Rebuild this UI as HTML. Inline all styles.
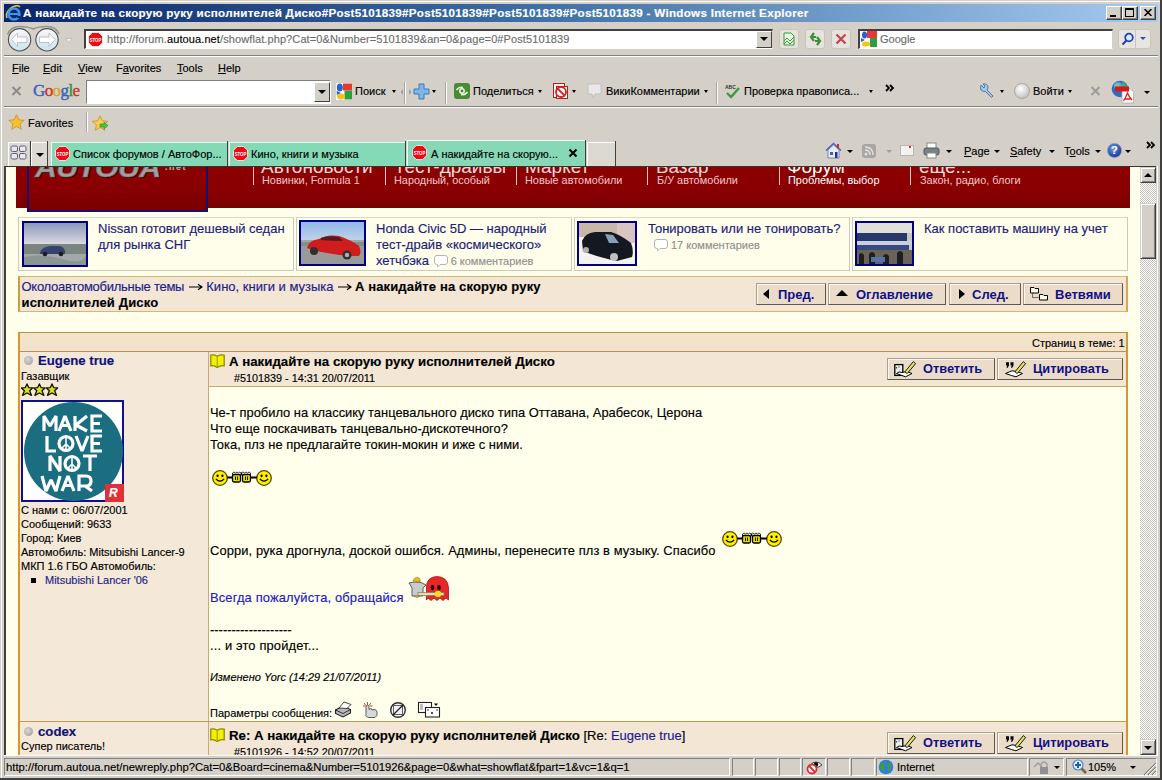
<!DOCTYPE html>
<html><head><meta charset="utf-8">
<style>
*{box-sizing:border-box}
html,body{margin:0;padding:0}
body{width:1162px;height:780px;overflow:hidden;position:relative;background:#D4D0C8;font-family:"Liberation Sans",sans-serif;font-size:11px;color:#000}
.a{position:absolute}
.t{position:absolute;white-space:nowrap;line-height:1;-webkit-text-stroke:0.15px currentColor}
/* chrome */
#title{left:4px;top:4px;width:1154px;height:18px;background:linear-gradient(to right,#0A246A 0%,#3A6EA5 45%,#A6CAF0 100%)}
#title .tt{left:19px;top:3.5px;color:#fff;font-weight:bold;font-size:11.2px;letter-spacing:0.27px;transform:scaleX(1.04);transform-origin:left}
.wbtn{position:absolute;top:6px;width:16px;height:14px;background:#D4D0C8;border:1px solid;border-color:#fff #404040 #404040 #fff;box-shadow:inset -1px -1px #808080}
#content{left:4px;top:166px;width:1152px;height:589px;border-top:1px solid #303830;border-left:2px solid #404040;background:#FFFEEA;overflow:hidden}
#status{left:4px;top:755px;width:1154px;height:23px}

.hb{font-size:19px;color:#F4D8D8;line-height:1;-webkit-text-stroke:0}
.hs{font-size:10.9px;color:#F0C8C8;line-height:1;-webkit-text-stroke:0}
.tz{top:50px;width:276px;height:54px;border:1px solid #CACABE;border-top-color:#D8D8CC}
.th{top:54px;height:46px;border:2px solid #0C0C78}
.tl{font-size:13px;line-height:16px;color:#1C1C7C}
.cm{font-size:11px;color:#909090;position:relative;padding-left:18px}
.ci{position:absolute;left:1px;top:0px;width:14px;height:13px}
.nb{top:116px;height:22px;background:#EADCC8;border:1px solid;border-color:#A8A090 #605848 #605848 #A8A090;box-shadow:inset 1px 1px #FFF8EE}
.nb span,.pb span{position:absolute;top:4px;font-size:13px;font-weight:bold;color:#10108A;white-space:nowrap;line-height:1}
.tri{position:absolute;width:0;height:0}
.pb{height:22px;background:#EADCC8;border:1px solid;border-color:#A8A090 #605848 #605848 #A8A090;box-shadow:inset 1px 1px #FFF8EE}
.pb span{top:4px;font-size:12.8px}
.pt{font-size:12.9px;line-height:16.2px}
.sbb{width:16px;height:16px;background:#D4D0C8;border:1px solid;border-color:#D4D0C8 #404040 #404040 #D4D0C8;box-shadow:inset 1px 1px #fff,inset -1px -1px #808080}
.sbb i{position:absolute;left:3px;width:0;height:0}
.sp{top:758px;height:18px;border:1px solid;border-color:#808080 #fff #fff #808080}
.bc{font-size:13px;line-height:16px}
</style></head><body>
<!-- frame -->
<div class="a" style="left:1px;top:1px;width:1px;height:777px;background:#fff"></div>
<div class="a" style="left:1px;top:1px;width:1159px;height:1px;background:#fff"></div>
<div class="a" style="left:1160px;top:0;width:2px;height:780px;background:#404040"></div>
<div class="a" style="left:0;top:778px;width:1162px;height:2px;background:#404040"></div>
<div class="a" style="left:1157px;top:166px;width:1px;height:589px;background:#fff"></div>

<div id="title" class="a">
  <div class="t tt">А накидайте на скорую руку исполнителей Диско#Post5101839#Post5101839#Post5101839#Post5101839 - Windows Internet Explorer</div>
</div>
<svg class="a" style="left:5px;top:5px" width="17" height="17" viewBox="0 0 17 17"><path d="M2 13 Q0 8 6 3 Q12 -1 15 2" fill="none" stroke="#E8C040" stroke-width="1.6"/><circle cx="9" cy="9" r="5.5" fill="none" stroke="#3A98E8" stroke-width="2.5"/><path d="M4 9 H14" stroke="#3A98E8" stroke-width="2"/><path d="M12 12 L15 12" stroke="#0A246A" stroke-width="2"/></svg>
<div class="wbtn" style="left:1106px"></div>
<div class="wbtn" style="left:1122px"></div>
<div class="wbtn" style="left:1140px"></div>
<div class="a" style="left:1110px;top:15px;width:6px;height:2px;background:#000"></div>
<div class="a" style="left:1125px;top:8px;width:9px;height:9px;border:1px solid #000;border-top-width:2px"></div>
<svg class="a" style="left:1144px;top:9px" width="8" height="7" viewBox="0 0 8 7"><path d="M0.5 0 L7.5 7 M7.5 0 L0.5 7" stroke="#000" stroke-width="1.5"/></svg>

<!-- nav bar -->
<svg class="a" style="left:4px;top:22px" width="70" height="33" viewBox="0 0 70 33">
 <defs><linearGradient id="bg1" x1="0" y1="0" x2="0" y2="1"><stop offset="0" stop-color="#FAFBFD"/><stop offset="0.5" stop-color="#E4E8F0"/><stop offset="1" stop-color="#C8E8F4"/></linearGradient></defs>
 <path d="M3.5 12.5 Q7 4.5 15.6 4.5 Q24 4.5 29.3 7 Q34 4.5 43 4.5 Q52 4.5 55 12" fill="none" stroke="#8E968C" stroke-width="1.5"/>
 <circle cx="15.6" cy="17.8" r="11.2" fill="url(#bg1)" stroke="#4E4E4E" stroke-width="1.1"/>
 <circle cx="43" cy="17.8" r="11.2" fill="url(#bg1)" stroke="#4E4E4E" stroke-width="1.1"/>
 <path d="M7.5 17.5 L13.5 11 L13.5 15 L23 15 L23 20.5 L13.5 20.5 L13.5 24.5 Z" fill="#fff" stroke="#B0BCC8" stroke-width="0.9"/>
 <path d="M51 17.5 L45 11 L45 15 L35.5 15 L35.5 20.5 L45 20.5 L45 24.5 Z" fill="#fff" stroke="#B0BCC8" stroke-width="0.9"/>
 <path d="M61.5 16.5 L68 16.5 L64.75 20.5 Z" fill="#F0EEEA" stroke="#B8B4AC" stroke-width="0.7"/>
</svg>
<div class="a" style="left:84px;top:29px;width:689px;height:20px;background:#fff;border-top:2px solid #404040;border-left:2px solid #404040;border-right:1px solid #D4D0C8;border-bottom:1px solid #fff"></div>
<svg class="a" style="left:88px;top:32px" width="15" height="15" viewBox="0 0 15 15"><path d="M4.3 0.5 H10.7 L14.5 4.3 V10.7 L10.7 14.5 H4.3 L0.5 10.7 V4.3 Z" fill="#EE0A14" stroke="#fff" stroke-width="0.8"/><text x="7.5" y="9.6" font-size="5.6" font-weight="bold" fill="#fff" text-anchor="middle" font-family="Liberation Sans" textLength="11.5" lengthAdjust="spacingAndGlyphs">STOP</text></svg>
<div class="t" style="left:107px;top:34px;font-size:11px;color:#6D6D6D;letter-spacing:0.1px">http://forum.<span style="color:#000">autoua.net</span>/showflat.php?Cat=0&amp;Number=5101839&amp;an=0&amp;page=0#Post5101839</div>
<div class="a" style="left:756px;top:31px;width:16px;height:17px;background:#D4D0C8;border:1px solid;border-color:#fff #404040 #404040 #fff"></div>
<div class="a" style="left:760px;top:37px;width:0;height:0;border-left:4px solid transparent;border-right:4px solid transparent;border-top:4px solid #000"></div>
<div class="a" style="left:779px;top:29px;width:20px;height:20px;border:1px solid #C8C5BE;border-radius:3px;background:#E6E3DD"></div>
<svg class="a" style="left:782px;top:32px" width="14" height="14" viewBox="0 0 14 14"><path d="M2 1 H9 L12 4 V13 H2 Z" fill="#E8F8E8" stroke="#3A9A3A"/><path d="M2 9 L5 6 L8 9 L12 5 M2 12 L5 9 L8 12 L12 8" fill="none" stroke="#3A9A3A"/></svg>
<div class="a" style="left:805px;top:29px;width:20px;height:20px;border:1px solid #C8C5BE;border-radius:3px;background:#E6E3DD"></div>
<svg class="a" style="left:808px;top:32px" width="15" height="14" viewBox="0 0 15 14"><path d="M6 1 L3 5 L6 9 M3 5 H8" fill="none" stroke="#3C8E3C" stroke-width="2.2"/><path d="M9 13 L12 9 L9 5 M12 9 H7" fill="none" stroke="#3C8E3C" stroke-width="2.2"/></svg>
<div class="a" style="left:831px;top:29px;width:20px;height:20px;border:1px solid #C8C5BE;border-radius:3px;background:#E6E3DD"></div>
<svg class="a" style="left:835px;top:33px" width="12" height="12" viewBox="0 0 12 12"><path d="M1.5 1.5 L10.5 10.5 M10.5 1.5 L1.5 10.5" stroke="#C0444C" stroke-width="2.2"/></svg>
<div class="a" style="left:858px;top:29px;width:255px;height:20px;background:#fff;border-top:2px solid #404040;border-left:2px solid #404040;border-right:1px solid #D4D0C8;border-bottom:1px solid #fff"></div>
<svg class="a" style="left:861px;top:31px" width="16" height="16" viewBox="0 0 16 16"><rect x="0" y="0" width="16" height="16" fill="#fff"/><path d="M6 0 H16 V7 H6 Z" fill="#E53935"/><path d="M9 7 H16 V16 H9 Z" fill="#2E9E3E"/><ellipse cx="3.5" cy="4" rx="2.5" ry="3.5" fill="#2A5FD0"/><ellipse cx="5" cy="13" rx="4" ry="2.5" fill="#F6C21A"/><path d="M0 7 L4 9 L0 11Z" fill="#2A5FD0"/></svg>
<div class="t" style="left:880px;top:34px;font-size:11px;color:#6D6D6D">Google</div>
<div class="a" style="left:1118px;top:29px;width:33px;height:20px;border:1px solid #C8C5BE;border-radius:3px;background:#E8E5E0"></div>
<div class="a" style="left:1135px;top:30px;width:1px;height:18px;background:#C8C5BE"></div>
<svg class="a" style="left:1121px;top:32px" width="13" height="14" viewBox="0 0 13 14"><circle cx="8" cy="5.5" r="3.8" fill="#D8F0FF" stroke="#2040C0" stroke-width="1.8"/><path d="M5.5 8.5 L1.5 12.5" stroke="#2040C0" stroke-width="2.2"/></svg>
<div class="a" style="left:1140px;top:37px;width:0;height:0;border-left:3px solid transparent;border-right:3px solid transparent;border-top:3px solid #3050B0"></div>
<div class="a" style="left:4px;top:55px;width:1154px;height:1px;background:#808080"></div>
<div class="a" style="left:4px;top:56px;width:1154px;height:1px;background:#fff"></div>

<!-- menu bar -->
<div class="t" style="left:12px;top:63px"><u>F</u>ile</div>
<div class="t" style="left:43px;top:63px"><u>E</u>dit</div>
<div class="t" style="left:78px;top:63px"><u>V</u>iew</div>
<div class="t" style="left:116px;top:63px">F<u>a</u>vorites</div>
<div class="t" style="left:177px;top:63px"><u>T</u>ools</div>
<div class="t" style="left:218px;top:63px"><u>H</u>elp</div>

<!-- google toolbar -->
<svg class="a" style="left:11px;top:86px" width="11" height="10" viewBox="0 0 11 10"><path d="M1.5 1 L9.5 9 M9.5 1 L1.5 9" stroke="#8C8C8C" stroke-width="2"/></svg>
<div class="t" style="left:33px;top:82px;font-family:'Liberation Serif',serif;font-size:17px;letter-spacing:-0.6px;-webkit-text-stroke:0.4px currentColor"><span style="color:#3462C4">G</span><span style="color:#C8382A">o</span><span style="color:#D8A818">o</span><span style="color:#3462C4">g</span><span style="color:#30963A">l</span><span style="color:#C8382A">e</span></div>
<div class="a" style="left:86px;top:80px;width:245px;height:24px;background:#fff;border:1px solid;border-color:#808080 #fff #fff #808080"></div>
<div class="a" style="left:314px;top:82px;width:16px;height:20px;background:#D4D0C8;border:1px solid;border-color:#fff #404040 #404040 #fff"></div>
<div class="a" style="left:318px;top:90px;width:0;height:0;border-left:4px solid transparent;border-right:4px solid transparent;border-top:4px solid #000"></div>
<svg class="a" style="left:336px;top:83px" width="16" height="17" viewBox="0 0 16 17"><rect x="0" y="0" width="16" height="17" fill="#fff"/><path d="M7 0.5 H16 V7.5 H7 Z" fill="#E53935"/><path d="M8.5 7.5 H16 V16.5 H8.5 Z" fill="#2E9E3E"/><ellipse cx="3.8" cy="4.5" rx="3" ry="4" fill="#2A5FD0"/><path d="M0.5 8 L5 10 L1 12Z" fill="#2A5FD0"/><ellipse cx="5" cy="13.5" rx="4" ry="3" fill="#F6C21A"/></svg>
<div class="t" style="left:355px;top:86px">Поиск</div>
<div class="a" style="left:392px;top:90px;width:0;height:0;border-left:2.5px solid transparent;border-right:2.5px solid transparent;border-top:3px solid #000"></div><svg class="a" style="left:400px;top:88px" width="12" height="8" viewBox="0 0 12 8"><path d="M3 1 L0.5 4 L3 7Z M9 1 L11.5 4 L9 7Z" fill="#A0A0A8"/></svg>
<div class="a" style="left:404px;top:82px;width:1px;height:22px;background:#A8A59E"></div><div class="a" style="left:405px;top:82px;width:1px;height:22px;background:#fff"></div>
<svg class="a" style="left:413px;top:83px" width="17" height="17" viewBox="0 0 17 17"><path d="M6 1 H11 V6 H16 V11 H11 V16 H6 V11 H1 V6 H6 Z" fill="#7FB6E8" stroke="#3A78B8"/></svg>
<div class="a" style="left:432px;top:90px;width:0;height:0;border-left:2.5px solid transparent;border-right:2.5px solid transparent;border-top:3px solid #000"></div>
<div class="a" style="left:445px;top:82px;width:1px;height:22px;background:#A8A59E"></div><div class="a" style="left:446px;top:82px;width:1px;height:22px;background:#fff"></div>
<svg class="a" style="left:454px;top:83px" width="16" height="16" viewBox="0 0 16 16"><rect x="0" y="0" width="16" height="16" rx="3" fill="#4A8A34"/><path d="M2.5 7 Q5 3.5 9 4.5 M13.5 9 Q11 12.5 7 11.5" fill="none" stroke="#E8F8E0" stroke-width="1.6"/><circle cx="8" cy="8" r="2.2" fill="none" stroke="#E8F8E0" stroke-width="1.5"/></svg>
<div class="t" style="left:473px;top:86px">Поделиться</div>
<div class="a" style="left:538px;top:90px;width:0;height:0;border-left:2.5px solid transparent;border-right:2.5px solid transparent;border-top:3px solid #000"></div>
<svg class="a" style="left:552px;top:82px" width="17" height="18" viewBox="0 0 17 18"><rect x="1.5" y="1.5" width="11" height="14" fill="#F4F0F0" stroke="#A02828"/><rect x="4.5" y="4.5" width="11" height="12" fill="#fff" stroke="#A02828"/><circle cx="9" cy="10" r="5" fill="none" stroke="#E02020" stroke-width="1.8"/><path d="M5.5 6.5 L12.5 13.5" stroke="#E02020" stroke-width="1.8"/></svg>
<div class="a" style="left:572px;top:90px;width:0;height:0;border-left:2.5px solid transparent;border-right:2.5px solid transparent;border-top:3px solid #000"></div>
<svg class="a" style="left:587px;top:83px" width="15" height="17" viewBox="0 0 15 17"><path d="M1 1 H14 V11 H8 L6 15 L5 11 H1 Z" fill="#E8E8E8" stroke="#C0C0C0"/></svg>
<div class="t" style="left:606px;top:86px">ВикиКомментарии</div>
<div class="a" style="left:704px;top:90px;width:0;height:0;border-left:2.5px solid transparent;border-right:2.5px solid transparent;border-top:3px solid #000"></div>
<div class="a" style="left:716px;top:82px;width:1px;height:22px;background:#A8A59E"></div><div class="a" style="left:717px;top:82px;width:1px;height:22px;background:#fff"></div>
<svg class="a" style="left:724px;top:83px" width="17" height="17" viewBox="0 0 17 17"><text x="1" y="6" font-size="5" font-weight="bold" font-family="Liberation Sans" fill="#333">ABC</text><path d="M3 10 L7 14 L15 5" fill="none" stroke="#3A9A3A" stroke-width="2.4"/></svg>
<div class="t" style="left:744px;top:86px">Проверка правописа...</div>
<div class="a" style="left:869px;top:90px;width:0;height:0;border-left:2.5px solid transparent;border-right:2.5px solid transparent;border-top:3px solid #000"></div>
<svg class="a" style="left:885px;top:84px" width="10" height="8" viewBox="0 0 10 8"><path d="M1 1 L4 4 L1 7 M5 1 L8 4 L5 7" fill="none" stroke="#000" stroke-width="1.8"/></svg>
<svg class="a" style="left:978px;top:82px" width="17" height="17" viewBox="0 0 17 17"><path d="M3 3 L6 6 L7 4 L5 2 Q9 1 10 5 Q10 7 9 8 L15 14 L13.5 15.5 L7.5 9.5 Q5 10 3 8 Q2 6 3 3Z" fill="#A8C8E8" stroke="#4A78A8"/></svg>
<div class="a" style="left:1000px;top:90px;width:0;height:0;border-left:2.5px solid transparent;border-right:2.5px solid transparent;border-top:3px solid #000"></div>
<div class="a" style="left:1014px;top:83px;width:16px;height:16px;border-radius:50%;background:radial-gradient(circle at 40% 35%,#fff,#C8C8C8 70%,#A0A0A0);border:1px solid #A8A8A8"></div>
<div class="t" style="left:1033px;top:86px">Войти</div>
<div class="a" style="left:1068px;top:90px;width:0;height:0;border-left:2.5px solid transparent;border-right:2.5px solid transparent;border-top:3px solid #000"></div>
<svg class="a" style="left:1090px;top:86px" width="11" height="10" viewBox="0 0 11 10"><path d="M1.5 1 L9.5 9 M9.5 1 L1.5 9" stroke="#9C9C9C" stroke-width="2"/></svg>
<svg class="a" style="left:1111px;top:80px" width="24" height="24" viewBox="0 0 24 24"><circle cx="9" cy="9" r="8.3" fill="#2E6EC0"/><path d="M3 5 Q6 2 9 4 Q8 8 5 9Z M11 2 Q15 3 16 7 Q13 8 11 6Z" fill="#4CB050"/><circle cx="7" cy="6" r="4" fill="#9AD0F8" opacity="0.5"/><path d="M11 8.5 H19 L22.5 12 V23 H11Z" fill="#fff" stroke="#A8A8A8" stroke-width="0.8"/><rect x="4" y="6.5" width="14" height="5" fill="#D81818"/><path d="M12.5 21 Q15 17 16.5 13 Q18 17 21 20 M13.5 19 H20" fill="none" stroke="#E02020" stroke-width="1.3"/></svg>
<div class="a" style="left:1144px;top:91px;width:0;height:0;border-left:3px solid transparent;border-right:3px solid transparent;border-top:3px solid #000"></div>
<div class="a" style="left:4px;top:106px;width:1154px;height:1px;background:#808080"></div>
<div class="a" style="left:4px;top:107px;width:1154px;height:1px;background:#fff"></div>

<!-- favorites bar -->
<svg class="a" style="left:8px;top:114px" width="17" height="17" viewBox="0 0 17 17"><path d="M8.5 0.8 L10.8 5.8 L16.2 6.3 L12 9.9 L13.3 15.3 L8.5 12.4 L3.7 15.3 L5 9.9 L0.8 6.3 L6.2 5.8 Z" fill="#F6C130" stroke="#C89020" stroke-width="0.8"/></svg>
<div class="t" style="left:28px;top:118px">Favorites</div>
<div class="a" style="left:86px;top:112px;width:1px;height:20px;background:#A8A59E"></div><div class="a" style="left:87px;top:112px;width:1px;height:20px;background:#fff"></div>
<svg class="a" style="left:92px;top:115px" width="17" height="17" viewBox="0 0 17 17"><path d="M8 0.8 L10.3 5.8 L15.7 6.3 L11.5 9.9 L12.8 15.3 L8 12.4 L3.2 15.3 L4.5 9.9 L0.3 6.3 L5.7 5.8 Z" fill="#F6D050" stroke="#C89020" stroke-width="0.8"/><path d="M8 9 H12 V7 L16 10.5 L12 14 V12 H8Z" fill="#50C040" stroke="#2A8A2A" stroke-width="0.6"/></svg>

<!-- tab row -->
<div class="a" style="left:8px;top:142px;width:21px;height:24px;background:#DCD9D2;border-left:1px solid #fff;border-top:1px solid #fff"></div>
<svg class="a" style="left:10px;top:145px" width="17" height="16" viewBox="0 0 17 16"><rect x="1" y="1" width="6.5" height="5.5" rx="1.5" fill="#E8E8F4" stroke="#606070"/><rect x="9.5" y="1" width="6.5" height="5.5" rx="1.5" fill="#E8E8F4" stroke="#606070"/><rect x="1" y="8.5" width="6.5" height="5.5" rx="1.5" fill="#E8E8F4" stroke="#606070"/><rect x="9.5" y="8.5" width="6.5" height="5.5" rx="1.5" fill="#E8E8F4" stroke="#606070"/></svg>
<div class="a" style="left:30px;top:141px;width:1px;height:25px;background:#404040"></div>
<div class="a" style="left:31px;top:142px;width:16px;height:24px;background:#DCD9D2;border-left:1px solid #fff;border-top:1px solid #fff"></div>
<div class="a" style="left:36px;top:153px;width:0;height:0;border-left:4px solid transparent;border-right:4px solid transparent;border-top:4px solid #000"></div>
<div class="a" style="left:47px;top:141px;width:1px;height:25px;background:#404040"></div>
<div class="a" style="left:51px;top:142px;width:177px;height:25px;background:#84D9B6;border-top:1px solid #E8F8F0;border-left:1px solid #E8F8F0"></div>
<div class="a" style="left:227px;top:141px;width:1px;height:25px;background:#404040"></div>
<svg class="a" style="left:55px;top:146px" width="15" height="15" viewBox="0 0 15 15"><path d="M4.3 0.5 H10.7 L14.5 4.3 V10.7 L10.7 14.5 H4.3 L0.5 10.7 V4.3 Z" fill="#EE0A14" stroke="#fff" stroke-width="0.8"/><text x="7.5" y="9.6" font-size="5.6" font-weight="bold" fill="#fff" text-anchor="middle" font-family="Liberation Sans" textLength="11.5" lengthAdjust="spacingAndGlyphs">STOP</text></svg>
<div class="t" style="left:73px;top:149px">Список форумов / АвтоФор...</div>
<div class="a" style="left:229px;top:142px;width:177px;height:25px;background:#84D9B6;border-top:1px solid #E8F8F0;border-left:1px solid #E8F8F0"></div>
<div class="a" style="left:405px;top:141px;width:1px;height:25px;background:#404040"></div>
<svg class="a" style="left:233px;top:146px" width="15" height="15" viewBox="0 0 15 15"><path d="M4.3 0.5 H10.7 L14.5 4.3 V10.7 L10.7 14.5 H4.3 L0.5 10.7 V4.3 Z" fill="#EE0A14" stroke="#fff" stroke-width="0.8"/><text x="7.5" y="9.6" font-size="5.6" font-weight="bold" fill="#fff" text-anchor="middle" font-family="Liberation Sans" textLength="11.5" lengthAdjust="spacingAndGlyphs">STOP</text></svg>
<div class="t" style="left:251px;top:149px">Кино, книги и музыка</div>
<div class="a" style="left:407px;top:140px;width:179px;height:27px;background:#86D8B6;border-top:1px solid #F0FFF8;border-left:1px solid #F0FFF8"></div>
<div class="a" style="left:585px;top:140px;width:1px;height:26px;background:#404040"></div>
<svg class="a" style="left:412px;top:145px" width="15" height="15" viewBox="0 0 15 15"><path d="M4.3 0.5 H10.7 L14.5 4.3 V10.7 L10.7 14.5 H4.3 L0.5 10.7 V4.3 Z" fill="#EE0A14" stroke="#fff" stroke-width="0.8"/><text x="7.5" y="9.6" font-size="5.6" font-weight="bold" fill="#fff" text-anchor="middle" font-family="Liberation Sans" textLength="11.5" lengthAdjust="spacingAndGlyphs">STOP</text></svg>
<div class="t" style="left:431px;top:149px">А накидайте на скорую...</div>
<svg class="a" style="left:568px;top:148px" width="10" height="10" viewBox="0 0 10 10"><path d="M1.5 1.5 L8.5 8.5 M8.5 1.5 L1.5 8.5" stroke="#000" stroke-width="2"/></svg>
<div class="a" style="left:587px;top:142px;width:29px;height:24px;background:#DCD9D2;border-top:1px solid #fff;border-left:1px solid #fff"></div>
<div class="a" style="left:615px;top:141px;width:1px;height:25px;background:#404040"></div>

<svg class="a" style="left:825px;top:142px" width="17" height="17" viewBox="0 0 17 17"><path d="M1 8.5 L8.5 1.5 L16 8.5" fill="none" stroke="#5060C0" stroke-width="1.5"/><path d="M3 8 V16 H14 V8 L8.5 3 Z" fill="#E8ECF8" stroke="#6070A0" stroke-width="0.8"/><rect x="5" y="10" width="3" height="3" fill="#4060B0"/><rect x="10" y="10" width="2.5" height="6" fill="#203880"/><rect x="12" y="2" width="2" height="4" fill="#C03030"/></svg>
<div class="a" style="left:847px;top:150px;width:0;height:0;border-left:3px solid transparent;border-right:3px solid transparent;border-top:3px solid #000"></div>
<div class="a" style="left:862px;top:144px;width:14px;height:14px;border-radius:3px;background:#A8A6A0"></div>
<svg class="a" style="left:862px;top:144px" width="14" height="14" viewBox="0 0 14 14"><circle cx="4" cy="10" r="1.5" fill="#E0E0E0"/><path d="M3 6 Q8 6 8 11 M3 3 Q11 3 11 11" fill="none" stroke="#E0E0E0" stroke-width="1.5"/></svg>
<div class="a" style="left:886px;top:150px;width:0;height:0;border-left:3px solid transparent;border-right:3px solid transparent;border-top:3px solid #A0A0A0"></div>
<div class="a" style="left:900px;top:145px;width:14px;height:11px;background:#F4F2EE;border:1px solid #B8B6B0"></div>
<div class="a" style="left:909px;top:146px;width:2px;height:2px;background:#D03030"></div>
<svg class="a" style="left:923px;top:142px" width="17" height="17" viewBox="0 0 17 17"><rect x="4" y="1" width="9" height="6" fill="#fff" stroke="#888"/><rect x="1" y="6" width="15" height="7" rx="2" fill="#7A8088" stroke="#505860"/><rect x="4" y="11" width="9" height="5" fill="#fff" stroke="#888"/></svg>
<div class="a" style="left:946px;top:150px;width:0;height:0;border-left:3px solid transparent;border-right:3px solid transparent;border-top:3px solid #000"></div>
<div class="t" style="left:964px;top:146px"><u>P</u>age</div>
<div class="a" style="left:994px;top:150px;width:0;height:0;border-left:3px solid transparent;border-right:3px solid transparent;border-top:3px solid #000"></div>
<div class="t" style="left:1010px;top:146px"><u>S</u>afety</div>
<div class="a" style="left:1049px;top:150px;width:0;height:0;border-left:3px solid transparent;border-right:3px solid transparent;border-top:3px solid #000"></div>
<div class="t" style="left:1064px;top:146px">T<u>o</u>ols</div>
<div class="a" style="left:1095px;top:150px;width:0;height:0;border-left:3px solid transparent;border-right:3px solid transparent;border-top:3px solid #000"></div>
<div class="a" style="left:1107px;top:143px;width:15px;height:15px;border-radius:50%;background:radial-gradient(circle at 40% 35%,#6A9AE8,#1A3A9A 75%);border:1px solid #8090B0"></div>
<div class="t" style="left:1111px;top:145px;color:#fff;font-weight:bold;font-size:11px">?</div>
<div class="a" style="left:1125px;top:150px;width:0;height:0;border-left:3px solid transparent;border-right:3px solid transparent;border-top:3px solid #000"></div>
<svg class="a" style="left:1146px;top:141px" width="10" height="8" viewBox="0 0 10 8"><path d="M1 1 L4 4 L1 7 M5 1 L8 4 L5 7" fill="none" stroke="#000" stroke-width="1.8"/></svg>

<!-- content -->
<div id="content" class="a">
  <!-- header -->
  <div class="a" style="left:10px;top:0;width:1114px;height:41px;background:linear-gradient(#8C0000,#8A0002 50%,#7C0000)"></div>
  <div class="a" style="left:21px;top:-2px;width:181px;height:47px;border:2px solid #18106A;border-top:0;background:linear-gradient(#8C0000,#8A0002 45%,#7C0000 88%,#7C0000)"></div>
  <div class="t" style="left:29px;top:-12px;font-size:27px;font-weight:bold;font-style:italic;color:#A0A0A0;letter-spacing:-0.5px;transform:scaleX(1.12);transform-origin:left;text-shadow:1px 1px 0 #300000,0 0 0 #000;-webkit-text-stroke:0.6px #707070">AUTOUA</div>
  <div class="t" style="left:159px;top:-4px;font-size:9px;font-weight:bold;color:#B0B0B0;letter-spacing:1.5px">.net</div>
  <div class="a" style="left:247px;top:0;width:1px;height:18px;background:#E8C8C8"></div>
  <div class="a" style="left:379px;top:0;width:1px;height:18px;background:#E8C8C8"></div>
  <div class="a" style="left:510px;top:0;width:1px;height:18px;background:#E8C8C8"></div>
  <div class="a" style="left:641px;top:0;width:1px;height:18px;background:#E8C8C8"></div>
  <div class="a" style="left:773px;top:0;width:1px;height:18px;background:#E8C8C8"></div>
  <div class="a" style="left:904px;top:0;width:1px;height:18px;background:#E8C8C8"></div>
  <div class="t hb" style="left:255px;top:-10px">Автоновости</div>
  <div class="t hb" style="left:388px;top:-10px">Тест-драйвы</div>
  <div class="t hb" style="left:519px;top:-10px">Маркет</div>
  <div class="t hb" style="left:650px;top:-10px">Базар</div>
  <div class="t hb" style="left:781px;top:-10px;color:#fff">Форум</div>
  <div class="t hb" style="left:913px;top:-10px">еще...</div>
  <div class="t hs" style="left:256px;top:8px">Новинки, Formula 1</div>
  <div class="t hs" style="left:388px;top:8px">Народный, особый</div>
  <div class="t hs" style="left:519px;top:8px">Новые автомобили</div>
  <div class="t hs" style="left:651px;top:8px">Б/У автомобили</div>
  <div class="t hs" style="left:782px;top:8px;color:#fff">Проблемы, выбор</div>
  <div class="t hs" style="left:914px;top:8px">Закон, радио, блоги</div>

  <!-- teasers -->
  <div class="a tz" style="left:12px"></div>
  <div class="a tz" style="left:290px"></div>
  <div class="a tz" style="left:568px"></div>
  <div class="a tz" style="left:846px"></div>
  <svg class="a" style="left:16px;top:54px" width="66" height="46" viewBox="0 0 66 46"><defs><linearGradient id="sk1" x1="0" y1="0" x2="0" y2="1"><stop offset="0" stop-color="#8C98B8"/><stop offset="0.7" stop-color="#C4C8D8"/><stop offset="1" stop-color="#E0DCE4"/></linearGradient></defs><rect width="66" height="46" fill="#000080"/><rect x="2" y="2" width="62" height="22" fill="url(#sk1)"/><rect x="2" y="23" width="62" height="21" fill="#7A8480"/><rect x="2" y="33" width="62" height="11" fill="#A0A8A8"/><path d="M2 36 Q20 32 40 38 T64 35 V44 H2Z" fill="#8A9690"/><path d="M18 31 Q20 26 28 25 H38 Q42 26 43 30 V33 H18Z" fill="#34446E"/><circle cx="23" cy="33" r="2.3" fill="#1A1A20"/><circle cx="39" cy="33" r="2.3" fill="#1A1A20"/></svg>
  <svg class="a" style="left:293px;top:53px" width="67" height="46" viewBox="0 0 67 46"><defs><linearGradient id="sk2" x1="0" y1="0" x2="0" y2="1"><stop offset="0" stop-color="#90B8E8"/><stop offset="1" stop-color="#C8D8E8"/></linearGradient></defs><rect width="67" height="46" fill="#000080"/><rect x="2" y="2" width="63" height="22" fill="url(#sk2)"/><rect x="2" y="22" width="63" height="22" fill="#9A9A98"/><rect x="2" y="20" width="63" height="6" fill="#708070" opacity="0.5"/><path d="M8 28 Q10 20 20 19 Q28 14 40 16 Q52 20 60 26 Q63 32 60 36 L50 36 Q30 34 14 30Z" fill="#D01C1C"/><path d="M22 18 Q30 15 40 17 L44 21 Q32 21 22 20Z" fill="#502020"/><circle cx="15" cy="31" r="4" fill="#303030"/><circle cx="48" cy="35" r="4.5" fill="#303030"/><circle cx="48" cy="35" r="2.2" fill="#B0B0B0"/></svg>
  <svg class="a" style="left:571px;top:54px" width="60" height="45" viewBox="0 0 60 45"><rect width="60" height="45" fill="#000080"/><rect x="2" y="2" width="56" height="41" fill="#F4F2F2"/><rect x="2" y="2" width="56" height="14" fill="#C8B8A8"/><rect x="40" y="2" width="18" height="20" fill="#D8C4C0"/><path d="M5 20 Q8 12 18 11 H34 Q44 14 54 22 Q57 30 55 36 L40 40 Q20 36 6 30Z" fill="#141820"/><path d="M28 13 L36 14 L42 22 L32 22Z" fill="#8AA0B8"/><circle cx="37" cy="36" r="4" fill="#C0C0C0"/><circle cx="9" cy="29" r="3" fill="#B0B0B0"/></svg>
  <svg class="a" style="left:849px;top:54px" width="59" height="45" viewBox="0 0 59 45"><rect width="59" height="45" fill="#000080"/><rect x="2" y="2" width="55" height="41" fill="#C8C8BC"/><rect x="2" y="2" width="55" height="10" fill="#E0E0D8"/><rect x="2" y="12" width="50" height="8" fill="#28386A"/><rect x="2" y="20" width="55" height="4" fill="#C8D0E0"/><rect x="2" y="24" width="52" height="5" fill="#3A4A80"/><rect x="2" y="29" width="55" height="14" fill="#6A6458"/><path d="M4 43 V34 Q6 30 9 34 V43 M14 43 V33 Q17 29 20 33 V43 M28 43 V35 Q31 31 34 35 V43 M42 43 V32 Q45 28 48 32 V43" fill="#1E1E20"/><rect x="16" y="36" width="14" height="5" fill="#5A70A8"/></svg>
  <div class="t tl" style="left:92px;top:54px">Nissan готовит дешевый седан<br>для рынка СНГ</div>
  <div class="t tl" style="left:370px;top:54px">Honda Civic 5D — народный<br>тест-драйв «космического»<br>хетчбэка <span class="cm"><svg class="ci" width="14" height="13" viewBox="0 0 14 13"><path d="M3 0.5 H11 Q13.5 0.5 13.5 3 V7 Q13.5 9.5 11 9.5 H6 L3.5 12 V9.5 H3 Q0.5 9.5 0.5 7 V3 Q0.5 0.5 3 0.5Z" fill="#fff" stroke="#B4B4B4"/></svg>6 комментариев</span></div>
  <div class="t tl" style="left:642px;top:54px">Тонировать или не тонировать?<br><span class="cm" style="margin-left:5px"><svg class="ci" width="14" height="13" viewBox="0 0 14 13"><path d="M3 0.5 H11 Q13.5 0.5 13.5 3 V7 Q13.5 9.5 11 9.5 H6 L3.5 12 V9.5 H3 Q0.5 9.5 0.5 7 V3 Q0.5 0.5 3 0.5Z" fill="#fff" stroke="#B4B4B4"/></svg>17 комментариев</span></div>
  <div class="t tl" style="left:918px;top:54px">Как поставить машину на учет</div>

  <!-- breadcrumb -->
  <div class="a" style="left:12px;top:109px;width:1110px;height:36px;background:#F3E6D4;border:1px solid #D2B870;border-left:2px solid #C8A040;border-right:2px solid #D8A850"></div>
  <div class="t bc" style="left:15.5px;top:112px;letter-spacing:-0.26px;color:#1C1C8C">Околоавтомобильные темы</div>
  <svg class="a" style="left:183px;top:116px" width="14" height="8" viewBox="0 0 14 8"><path d="M0 4 H12.5 M9 1.2 L13 4 L9 6.8" fill="none" stroke="#000" stroke-width="1.2"/></svg>
  <div class="t bc" style="left:200.3px;top:112px;color:#1C1C8C">Кино, книги и музыка</div>
  <svg class="a" style="left:332px;top:116px" width="14" height="8" viewBox="0 0 14 8"><path d="M0 4 H12.5 M9 1.2 L13 4 L9 6.8" fill="none" stroke="#000" stroke-width="1.2"/></svg>
  <div class="t bc" style="left:348.9px;top:112px;font-weight:bold;letter-spacing:0.15px">А накидайте на скорую руку</div>
  <div class="t bc" style="left:15.5px;top:128px;font-weight:bold;letter-spacing:0.15px">исполнителей Диско</div>
  <div class="a nb" style="left:750px;width:70px"><i class="tri" style="border-right:6px solid #000;border-top:5px solid transparent;border-bottom:5px solid transparent;left:6px;top:5px"></i><span style="left:21px">Пред.</span></div>
  <div class="a nb" style="left:822px;width:118px"><i class="tri" style="border-bottom:6px solid #000;border-left:6px solid transparent;border-right:6px solid transparent;left:7px;top:6px"></i><span style="left:27px">Оглавление</span></div>
  <div class="a nb" style="left:943px;width:72px"><i class="tri" style="border-left:6px solid #000;border-top:5px solid transparent;border-bottom:5px solid transparent;left:9px;top:5px"></i><span style="left:22px">След.</span></div>
  <div class="a nb" style="left:1017px;width:100px"><svg class="a" style="left:6px;top:3px" width="18" height="14" viewBox="0 0 18 14"><path d="M0.5 0.5 H4 L5 1.5 H8.5 V6 H0.5Z" fill="#FFFCE8" stroke="#000" stroke-width="1"/><path d="M9.5 7.5 H13 L14 8.5 H17.5 V13 H9.5Z" fill="#FFFCE8" stroke="#000" stroke-width="1"/><path d="M2.5 6.5 V10.5 H9" fill="none" stroke="#000" stroke-width="1" stroke-dasharray="1 1"/></svg><span style="left:31px">Ветвями</span></div>

  <!-- post table -->
  <div class="a" style="left:12px;top:165px;width:1110px;height:430px;border-top:1px solid #A89848;border-left:2px solid #D8962E;border-right:2px solid #D8962E;background:#FFFFEC"></div>
  <div class="a" style="left:14px;top:166px;width:1106px;height:18px;background:linear-gradient(#F5E3C8,#F0E2CC)"></div>
  <div class="t" style="left:1026px;top:171px;font-size:11px">Страниц в теме: 1</div>
  <div class="a" style="left:14px;top:184px;width:1106px;height:1px;background:#B89050"></div>
  <!-- post 1 -->
  <div class="a" style="left:14px;top:185px;width:188px;height:369px;background:#F4E8D8"></div>
  <div class="a" style="left:202px;top:185px;width:1px;height:369px;background:#C8A878"></div>
  <div class="a" style="left:203px;top:185px;width:917px;height:34px;background:#F3E6D4"></div>
  <div class="a" style="left:203px;top:219px;width:917px;height:1px;background:#C8A870"></div>
  <div class="a" style="left:18px;top:189px;width:9px;height:9px;border-radius:50%;background:radial-gradient(circle at 40% 40%,#D8D8D8,#9A9A9A)"></div>
  <div class="t" style="left:32px;top:187px;font-size:13.2px;font-weight:bold;color:#10107A">Eugene true</div>
  <div class="t" style="left:15px;top:204px;font-size:11px">Газавщик</div>
  <svg class="a" style="left:15px;top:216px" width="38" height="14" viewBox="0 0 38 14"><g fill="#D8E020" stroke="#141400" stroke-width="1.3" stroke-linejoin="round"><path id="st" d="M6 0.9 L7.7 4.6 L11.6 4.9 L8.6 7.7 L10.5 12.3 L6 10 L1.5 12.3 L3.4 7.7 L0.4 4.9 L4.3 4.6Z"/><use href="#st" x="12.4"/><use href="#st" x="25"/></g></svg>
  <div class="a" style="left:15px;top:233px;width:103px;height:102px;border:2px solid #10108A;background:#fff"></div>
  <div class="a" style="left:18px;top:235px;width:99px;height:99px;border-radius:50%;background:#1A6E80"></div>
  <svg class="a" style="left:18px;top:235px" width="99" height="99" viewBox="0 0 99 99"><g fill="none" stroke="#fff" stroke-width="3.2" stroke-linejoin="miter" stroke-miterlimit="1.5">
<path d="M20 29 V14 L26 24 L32 14 V29"/><path d="M35 29 L41 14 L47 29 M37.5 23.5 H44.5"/><path d="M51 14 V29 M63 14 L52 23 L63 29"/><path d="M78 14 H68 V29 H78 M68 21.5 H76"/>
<path d="M23 34 V49 H32"/><circle cx="42" cy="41.5" r="7"/><path d="M42 34.5 V48.5 M42 42 L37 47 M42 42 L47 47" stroke-width="1.6"/><path d="M52 34 L58 49 L64 34"/><path d="M78 34 H68 V49 H78 M68 41.5 H76"/>
<path d="M26 69 V54 L36 69 V54"/><circle cx="48" cy="61.5" r="7"/><path d="M48 54.5 V68.5 M48 62 L43 67 M48 62 L53 67" stroke-width="1.6"/><path d="M59 54 H73 M66 54 V69"/>
<path d="M18 74 L22 89 L27 78 L32 89 L36 74"/><path d="M38 89 L44 74 L50 89 M40.5 83.5 H47.5"/><path d="M55 89 V74 H62 Q67 74 67 79 Q67 84 62 84 H55 M61 84 L68 89"/>
</g></svg>
  <div class="a" style="left:99px;top:317px;width:19px;height:18px;background:#E0303A"></div>
  <div class="t" style="left:103px;top:320px;color:#fff;font-weight:bold;font-style:italic;font-size:12px">R</div>
  <div class="t" style="left:15px;top:336px;font-size:11px;line-height:14px">С нами с: 06/07/2001<br>Сообщений: 9633<br>Город: Киев<br>Автомобиль: Mitsubishi Lancer-9<br>МКП 1.6 ГБО Автомобиль:</div>
  <div class="a" style="left:25px;top:411px;width:5px;height:5px;background:#000"></div>
  <div class="t" style="left:39px;top:408px;font-size:11px;color:#1C1C8C">Mitsubishi Lancer '06</div>

  <svg class="a" style="left:204px;top:187px" width="16" height="14" viewBox="0 0 16 14"><path d="M0.8 1.2 Q4 0.3 7.2 2.2 Q10.5 0.3 14.2 1.2 V11.8 Q10.5 11 7.2 13.5 Q4 11 0.8 11.8Z" fill="#F2F200" stroke="#8C8C00" stroke-width="1.3"/><path d="M7.2 3 V12.5" stroke="#8C8C00" stroke-width="0.9"/></svg>
  <div class="t" style="left:223px;top:188px;font-size:13.25px;font-weight:bold">А накидайте на скорую руку исполнителей Диско</div>
  <div class="t" style="left:228px;top:206px;font-size:10.8px">#5101839 - 14:31 20/07/2011</div>
  <div class="a pb" style="left:881px;top:191px;width:108px"><svg class="a" style="left:5px;top:2px" width="26" height="17" viewBox="0 0 26 17"><rect x="1.8" y="3.6" width="8" height="10.8" fill="#EEEEEE" stroke="#000" stroke-width="1.3"/><path d="M3.5 6 v1.5 M6 5.5 v1" stroke="#404040" stroke-width="1.2"/><path d="M3.5 12.5 Q6 10 9 11.5 L14 10.5 L19 12.5 L12.5 15.8 L9 14.5 Z" fill="#fff" stroke="#000" stroke-width="1"/><path d="M20.3 0.6 L22.6 2.6 L14.2 12.6 L12 10.8Z" fill="#E4E060" stroke="#1A1A00" stroke-width="1"/></svg><span style="left:35px">Ответить</span></div>
  <div class="a pb" style="left:991px;top:191px;width:126px"><svg class="a" style="left:5px;top:2px" width="26" height="17" viewBox="0 0 26 17"><path d="M3 1.2 H6 V4.5 L4.5 7 L3.5 6.5 L4.2 4.5 H3Z M7.5 1.2 H10.5 V4.5 L9 7 L8 6.5 L8.7 4.5 H7.5Z" fill="#000"/><path d="M2.5 12.5 L9 9.8 L14 10.5 L19.5 12.5 L13 15.8 L8.5 14.5 Z" fill="#fff" stroke="#000" stroke-width="1"/><path d="M20.3 0.6 L22.6 2.6 L14.2 12.6 L12 10.8Z" fill="#E4E060" stroke="#1A1A00" stroke-width="1"/></svg><span style="left:35px">Цитировать</span></div>

  <div class="t pt" style="left:204px;top:238px">Че-т пробило на классику танцевального диско типа Оттавана, Арабесок, Церона<br>Что еще поскачивать танцевально-дискотечного?<br>Тока, плз не предлагайте токин-мокин и иже с ними.</div>
  <svg class="a" style="left:206px;top:302px" width="60" height="17" viewBox="0 0 60 17"><g id="sm206"><circle cx="8" cy="9" r="7.3" fill="#FFF000" stroke="#5A4A00" stroke-width="1.3"/><ellipse cx="5.6" cy="6.8" rx="1.1" ry="1.4" fill="#000"/><ellipse cx="10.4" cy="6.8" rx="1.1" ry="1.4" fill="#000"/><path d="M3.8 9.8 Q8 14.5 12.2 9.8" fill="none" stroke="#000" stroke-width="1.2"/></g><use href="#sm206" x="44"/><path d="M15 8.5 H20 M39 8.5 H45" stroke="#000" stroke-width="1.8"/><path d="M20.5 4 Q22 2 23.5 4 Q25 2 26.5 4 Q28 2 29 4 Q31 2 32.5 4 Q34 2 35.5 4 Q37 2 38.5 4 V6 H20.5Z" fill="#fff" stroke="#000" stroke-width="0.8"/><rect x="20.5" y="5.5" width="8" height="7.5" rx="1.5" fill="#E8D800" stroke="#000" stroke-width="1.3"/><rect x="30.5" y="5.5" width="8" height="7.5" rx="1.5" fill="#E8D800" stroke="#000" stroke-width="1.3"/><path d="M23.5 7.5 V11 M25.5 7.5 V11 M33.5 7.5 V11 M35.5 7.5 V11" stroke="#000" stroke-width="0.9"/><circle cx="29.5" cy="5" r="1" fill="#000"/></svg>
  <div class="t pt" style="left:204px;top:376px;letter-spacing:0.1px">Сорри, рука дрогнула, доской ошибся. Админы, перенесите плз в музыку. Спасибо</div>
  <svg class="a" style="left:716px;top:363px" width="60" height="17" viewBox="0 0 60 17"><g id="sm716"><circle cx="8" cy="9" r="7.3" fill="#FFF000" stroke="#5A4A00" stroke-width="1.3"/><ellipse cx="5.6" cy="6.8" rx="1.1" ry="1.4" fill="#000"/><ellipse cx="10.4" cy="6.8" rx="1.1" ry="1.4" fill="#000"/><path d="M3.8 9.8 Q8 14.5 12.2 9.8" fill="none" stroke="#000" stroke-width="1.2"/></g><use href="#sm716" x="44"/><path d="M15 8.5 H20 M39 8.5 H45" stroke="#000" stroke-width="1.8"/><path d="M20.5 4 Q22 2 23.5 4 Q25 2 26.5 4 Q28 2 29 4 Q31 2 32.5 4 Q34 2 35.5 4 Q37 2 38.5 4 V6 H20.5Z" fill="#fff" stroke="#000" stroke-width="0.8"/><rect x="20.5" y="5.5" width="8" height="7.5" rx="1.5" fill="#E8D800" stroke="#000" stroke-width="1.3"/><rect x="30.5" y="5.5" width="8" height="7.5" rx="1.5" fill="#E8D800" stroke="#000" stroke-width="1.3"/><path d="M23.5 7.5 V11 M25.5 7.5 V11 M33.5 7.5 V11 M35.5 7.5 V11" stroke="#000" stroke-width="0.9"/><circle cx="29.5" cy="5" r="1" fill="#000"/></svg>
  <div class="t pt" style="left:204px;top:423px;color:#2020C0;letter-spacing:0.15px">Всегда пожалуйста, обращайся</div>
  <svg class="a" style="left:402px;top:409px" width="42" height="26" viewBox="0 0 42 26"><path d="M18.5 12 Q18 1 29 0.5 Q40 1 40.5 12 V24 L38 22 L35 24.5 L32 22 L29 24.5 L26 22 L23 24.5 L20 22 L18.5 24Z" fill="#E82828" stroke="#B01010" stroke-width="0.8"/><ellipse cx="24.5" cy="11.5" rx="1.8" ry="2.8" fill="#3A0000"/><ellipse cx="31" cy="11.5" rx="1.8" ry="2.8" fill="#3A0000"/><path d="M1 7 L6 6 L13 6.5 L18 9 L15 12 V20 H4 V12 Z" fill="#C8CCCC" stroke="#505050" stroke-width="0.9"/><path d="M5 5 Q6 1 10 1.5 Q13 2.5 12 6 Z" fill="#E8B820" stroke="#A07810" stroke-width="0.6"/><rect x="10" y="16.5" width="26" height="3" fill="#E8DCB8" stroke="#7A6A40" stroke-width="0.6"/><circle cx="30" cy="18" r="3.2" fill="#F0E020"/><path d="M6 20 Q9 23 12 20" fill="#C8C040" stroke="#606000" stroke-width="0.6"/></svg>
  <div class="t pt" style="left:204px;top:455px">-------------------</div>
  <div class="t pt" style="left:204px;top:471px;letter-spacing:0.15px">... и это пройдет...</div>
  <div class="t" style="left:204px;top:505px;font-size:11px;font-style:italic">Изменено Yorc (14:29 21/07/2011)</div>
  <div class="t" style="left:204px;top:541px;font-size:11px">Параметры сообщения:</div>
  <svg class="a" style="left:328px;top:534px" width="114" height="17" viewBox="0 0 114 17"><path d="M1.5 9 L9 5 L16.5 8.5 V12 L9 16 L1.5 12.5Z" fill="#B8B8B8" stroke="#202020" stroke-width="1.1"/><path d="M1.5 9 L9 12.5 L16.5 8.5" fill="none" stroke="#202020" stroke-width="0.9"/><path d="M5 7 L10 1 L17 3.5 L13 7.5Z" fill="#fff" stroke="#303030" stroke-width="0.9"/><path d="M32 5 V13 Q31 16 35 16.5 H41 Q44 15 43 11 L42 9 Q40 8 38 9 V8 Q36 7 35 8.5 V5 Q34 3 32 5Z" fill="#D8D8D8" stroke="#505050" stroke-width="0.9"/><path d="M33.5 1 V4 M30 2 L32 4.5 M37 2 L35 4.5 M29 5 H31.5 M36 5 H38.5" stroke="#C04040" stroke-width="1"/><circle cx="64" cy="9" r="7.3" fill="#F2F2F2" stroke="#303030" stroke-width="1.4"/><rect x="59.5" y="4.5" width="9" height="9" fill="none" stroke="#505050" stroke-width="0.9"/><path d="M59 14 L69 4" stroke="#202020" stroke-width="1.3"/><rect x="84.5" y="1.5" width="13" height="10" fill="#fff" stroke="#202020" stroke-width="1.1"/><path d="M86 4 h3 M86 6 h3 M86 8 h3" stroke="#808080"/><rect x="91.5" y="6.5" width="14" height="9.5" fill="#fff" stroke="#202020" stroke-width="1.1"/><path d="M100 2.5 H104 L102 5Z" fill="#000"/><circle cx="94" cy="9" r="0.7" fill="#000"/><circle cx="103" cy="9" r="0.7" fill="#000"/><circle cx="98" cy="12" r="0.9" fill="#000"/></svg>
  <div class="a" style="left:14px;top:554px;width:1106px;height:1px;background:#BC9C58"></div>
  <!-- post 2 -->
  <div class="a" style="left:14px;top:555px;width:188px;height:41px;background:#F4E8D8"></div>
  <div class="a" style="left:202px;top:555px;width:1px;height:41px;background:#C8A878"></div>
  <div class="a" style="left:203px;top:555px;width:917px;height:41px;background:#F3E6D4"></div>
  <div class="a" style="left:18px;top:560px;width:9px;height:9px;border-radius:50%;background:radial-gradient(circle at 40% 40%,#D8D8D8,#9A9A9A)"></div>
  <div class="t" style="left:32px;top:558px;font-size:13.2px;font-weight:bold;color:#10107A">codex</div>
  <div class="t" style="left:15px;top:574px;font-size:11px">Супер писатель!</div>
  <svg class="a" style="left:204px;top:561px" width="16" height="14" viewBox="0 0 16 14"><path d="M0.8 1.2 Q4 0.3 7.2 2.2 Q10.5 0.3 14.2 1.2 V11.8 Q10.5 11 7.2 13.5 Q4 11 0.8 11.8Z" fill="#F2F200" stroke="#8C8C00" stroke-width="1.3"/><path d="M7.2 3 V12.5" stroke="#8C8C00" stroke-width="0.9"/></svg>
  <div class="t" style="left:223px;top:562px;font-size:13.25px;font-weight:bold">Re: А накидайте на скорую руку исполнителей Диско <span style="font-weight:normal;font-size:13px">[Re: <span style="color:#1C1C8C">Eugene true</span>]</span></div>
  <div class="t" style="left:228px;top:580px;font-size:10.8px">#5101926 - 14:52 20/07/2011</div>
  <div class="a pb" style="left:881px;top:565px;width:108px"><svg class="a" style="left:5px;top:2px" width="26" height="17" viewBox="0 0 26 17"><rect x="1.8" y="3.6" width="8" height="10.8" fill="#EEEEEE" stroke="#000" stroke-width="1.3"/><path d="M3.5 6 v1.5 M6 5.5 v1" stroke="#404040" stroke-width="1.2"/><path d="M3.5 12.5 Q6 10 9 11.5 L14 10.5 L19 12.5 L12.5 15.8 L9 14.5 Z" fill="#fff" stroke="#000" stroke-width="1"/><path d="M20.3 0.6 L22.6 2.6 L14.2 12.6 L12 10.8Z" fill="#E4E060" stroke="#1A1A00" stroke-width="1"/></svg><span style="left:35px">Ответить</span></div>
  <div class="a pb" style="left:991px;top:565px;width:126px"><svg class="a" style="left:5px;top:2px" width="26" height="17" viewBox="0 0 26 17"><path d="M3 1.2 H6 V4.5 L4.5 7 L3.5 6.5 L4.2 4.5 H3Z M7.5 1.2 H10.5 V4.5 L9 7 L8 6.5 L8.7 4.5 H7.5Z" fill="#000"/><path d="M2.5 12.5 L9 9.8 L14 10.5 L19.5 12.5 L13 15.8 L8.5 14.5 Z" fill="#fff" stroke="#000" stroke-width="1"/><path d="M20.3 0.6 L22.6 2.6 L14.2 12.6 L12 10.8Z" fill="#E4E060" stroke="#1A1A00" stroke-width="1"/></svg><span style="left:35px">Цитировать</span></div>

  <!-- scrollbar -->
  <div class="a" style="left:1134px;top:0;width:16px;height:588px;background:repeating-conic-gradient(#C8C4BC 0 25%,#FFFFFF 0 50%) 0 0/2px 2px"></div>
  <div class="a sbb" style="left:1134px;top:0"><i style="border-bottom:4px solid #000;border-left:4px solid transparent;border-right:4px solid transparent;top:5px"></i></div>
  <div class="a sbb" style="left:1134px;top:572px"><i style="border-top:4px solid #000;border-left:4px solid transparent;border-right:4px solid transparent;top:6px"></i></div>
  <div class="a" style="left:1134px;top:36px;width:16px;height:56px;background:#D4D0C8;border:1px solid;border-color:#D4D0C8 #404040 #404040 #D4D0C8;box-shadow:inset 1px 1px #fff,inset -1px -1px #808080"></div>
</div>

<!-- status -->
<div class="a" style="left:4px;top:755px;width:1154px;height:1px;background:#fff"></div>
<div class="a sp" style="left:4px;width:726px"></div>
<div class="t" style="left:6px;top:762px;font-size:11.27px">http://forum.autoua.net/newreply.php?Cat=0&amp;Board=cinema&amp;Number=5101926&amp;page=0&amp;what=showflat&amp;fpart=1&amp;vc=1&amp;q=1</div>
<div class="a sp" style="left:732px;width:22px"></div>
<div class="a sp" style="left:755px;width:23px"></div>
<div class="a sp" style="left:779px;width:22px"></div>
<div class="a sp" style="left:802px;width:24px"></div>
<svg class="a" style="left:806px;top:759px" width="18" height="16" viewBox="0 0 18 16"><path d="M4 6 Q10 0 16 6 Q10 11 4 6Z" fill="#fff" stroke="#404040"/><circle cx="10" cy="5.5" r="2.2" fill="#000"/><circle cx="6" cy="10" r="4.5" fill="#fff" stroke="#D03030" stroke-width="1.8"/><path d="M3 7 L9 13" stroke="#D03030" stroke-width="1.8"/></svg>
<div class="a sp" style="left:827px;width:23px"></div>
<div class="a sp" style="left:851px;width:24px"></div>
<div class="a sp" style="left:876px;width:152px"></div>
<svg class="a" style="left:878px;top:759px" width="16" height="16" viewBox="0 0 16 16"><circle cx="8" cy="8" r="7.3" fill="#2F7FD8"/><path d="M3 4 Q6 3 7 6 Q5 9 7 12 Q4 12 2 9Z M9 3 Q13 4 13 8 Q11 10 12 13 Q9 12 10 8Z" fill="#3AA03A"/></svg>
<div class="t" style="left:897px;top:762px">Internet</div>
<div class="a sp" style="left:1029px;width:35px"></div>
<svg class="a" style="left:1032px;top:759px" width="18" height="16" viewBox="0 0 18 16"><path d="M2 8 L6 4 L10 8" fill="none" stroke="#A0A0A0" stroke-width="1.5"/><rect x="8" y="8" width="8" height="7" fill="#909090"/><path d="M9 8 V5 Q12 1 15 5 V8" fill="none" stroke="#A0A0A0" stroke-width="1.5"/></svg>
<div class="a" style="left:1054px;top:766px;width:0;height:0;border-left:3px solid transparent;border-right:3px solid transparent;border-top:3px solid #000"></div>
<div class="a sp" style="left:1066px;width:91px"></div>
<svg class="a" style="left:1072px;top:759px" width="16" height="16" viewBox="0 0 16 16"><path d="M8.5 8.5 L14 14" stroke="#806040" stroke-width="2.5"/><circle cx="6" cy="6" r="5" fill="#E0F0FF" stroke="#5080C0" stroke-width="1.2"/><path d="M6 3 V9 M3 6 H9" stroke="#1060C0" stroke-width="2"/></svg>
<div class="t" style="left:1088px;top:762px">105%</div>
<div class="a" style="left:1130px;top:766px;width:0;height:0;border-left:3px solid transparent;border-right:3px solid transparent;border-top:3px solid #000"></div>
<svg class="a" style="left:1143px;top:762px" width="14" height="14" viewBox="0 0 14 14"><path d="M13 1 L1 13 M13 5 L5 13 M13 9 L9 13" stroke="#808080" stroke-width="1.2"/><path d="M13 2 L2 13 M13 6 L6 13 M13 10 L10 13" stroke="#fff" stroke-width="0.8"/></svg>
</body></html>
